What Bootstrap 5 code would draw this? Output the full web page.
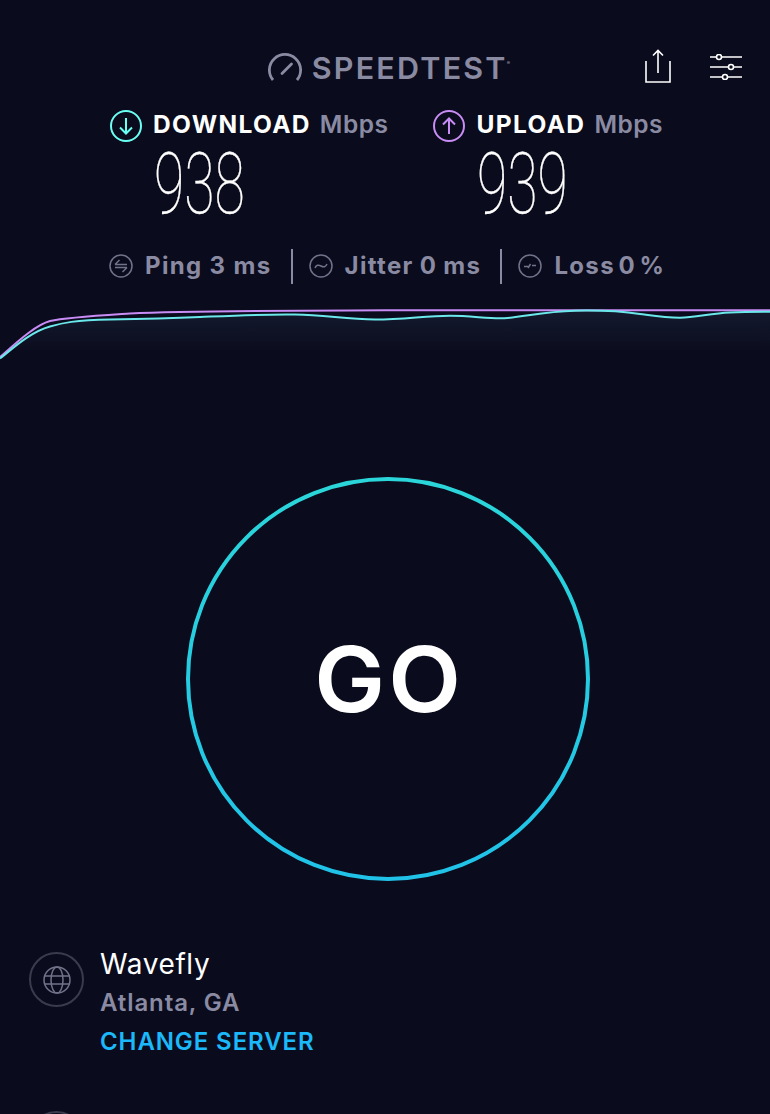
<!DOCTYPE html>
<html lang="en">
<head>
<meta charset="utf-8">
<title>Speedtest</title>
<link href="https://cdn.jsdelivr.net/npm/bootstrap@5.3.0/dist/css/bootstrap.min.css" rel="stylesheet">
<style>
html,body{height:1114px;overflow:hidden}
body{background:#0a0b1c;color:#fff;font-family:"Inter","Noto Sans",sans-serif}
.app-shell{width:770px;height:1114px;overflow:hidden;padding-top:48px}
.top-bar{display:grid;grid-template-columns:1fr auto 1fr;height:40px;align-items:center;padding-left:10px}
.brand-box{gap:10px}
.brand{color:#8a8ba3;font-size:30.5px;font-weight:600;line-height:40px;letter-spacing:2.2px}
.brand sup{font-size:5px;top:-14px;margin-left:-1px}
.top-actions{padding-right:28px;gap:39px}
.share-glyph{margin-bottom:5px}
.sliders-glyph{margin-bottom:2px}
.speeds{margin-top:22px;gap:45px;padding-left:3px}
.speed-head{font-size:24.5px;font-weight:700;height:32px;letter-spacing:1.35px;gap:11px;white-space:nowrap}
.speed-label{line-height:28px;margin-bottom:4px}
.speed-unit{color:#8a8ba3;font-weight:600;margin-left:9px;letter-spacing:.5px}
.speed-num{height:72px;margin-top:6px;margin-left:44px;font-family:"Roboto",sans-serif;font-weight:100;font-size:85px;line-height:72px;transform:scaleX(.65);transform-origin:0 0;white-space:nowrap;-webkit-text-stroke:.35px #fff}
.stats{margin-top:28px;height:36px;color:#8a8ba3;font-size:24px;font-weight:650;letter-spacing:1.35px;padding-left:109px}
.stat-item{gap:12px;white-space:nowrap}
.stat-jitter{word-spacing:-1px}
.stat-loss{word-spacing:-3.5px}
.stat-rule{width:2px;height:35px;background:#8a8ba3;flex:none;margin:0 16px 0 19px}
.graph{display:block;margin-top:11px;width:770px;height:75px}
.go-ring{width:404px;height:404px;margin:107px 0 0 186px}
.go-ring svg{inset:0}
.go-label{font-size:91px;font-weight:600;letter-spacing:3px;padding-left:3px;line-height:1;transform:scaleX(1.04)}
.server{margin:67px 0 0 29px;gap:16px}
.server-icon{width:55px;height:55px;flex:none;border:2px solid #3a3b4d;border-radius:50%;margin-top:4px}
.server-name{font-size:28px;font-weight:400;line-height:32px;letter-spacing:.6px}
.server-city{color:#8a8ba3;font-size:24px;font-weight:600;line-height:34px;margin-top:6px;letter-spacing:.9px}
.server-link{color:#1bb8fa;font-size:24px;font-weight:600;line-height:30px;margin-top:7px;text-decoration:none;display:block;letter-spacing:.9px}
.host-row{margin:54px 0 0 29px}
</style>
</head>
<body>
<main class="app-shell position-relative">
  <header class="top-bar">
    <div></div>
    <div class="brand-box d-flex align-items-center">
      <svg width="34" height="32" viewBox="0 0 34 32" fill="none" stroke="#8a8ba3" stroke-width="2.800"><path d="M5 28A15.600 15.600 0 1 1 29 28"/><path d="M14 21.500l9.500-9.500" stroke-linecap="round"/></svg>
      <span class="brand">SPEEDTEST<sup>®</sup></span>
    </div>
    <div class="top-actions d-flex justify-content-end align-items-center">
      <svg class="share-glyph" width="26" height="34" viewBox="0 0 26 34" fill="none" stroke="#fff" stroke-width="1.600"><path d="M1 12V33H25V12"/><path d="M13 24V1.500M8 6.500l5-5 5 5"/></svg>
      <svg class="sliders-glyph" width="32" height="26" viewBox="0 0 32 26" fill="none" stroke="#fff" stroke-width="1.600"><path d="M0 3h6M12 3h20M0 13h18M24 13h8M0 23h12M18 23h14"/><circle cx="9" cy="3" r="2.500"/><circle cx="21" cy="13" r="2.500"/><circle cx="15" cy="23" r="2.500"/></svg>
    </div>
  </header>

  <section class="speeds d-flex justify-content-center">
    <div>
      <div class="speed-head d-flex align-items-center">
        <svg width="32" height="32" viewBox="0 0 32 32" fill="none" stroke="#6afff3" stroke-width="2"><circle cx="16" cy="16" r="15"/><path d="M16 8v15M10 17.500l6 6 6-6"/></svg>
        <span class="speed-label">DOWNLOAD<span class="speed-unit">Mbps</span></span>
      </div>
      <div class="speed-num">938</div>
    </div>
    <div>
      <div class="speed-head d-flex align-items-center">
        <svg width="32" height="32" viewBox="0 0 32 32" fill="none" stroke="#c88cf5" stroke-width="2"><circle cx="16" cy="16" r="15"/><path d="M16 24V9M10 14.500l6-6 6 6"/></svg>
        <span class="speed-label">UPLOAD<span class="speed-unit">Mbps</span></span>
      </div>
      <div class="speed-num">939</div>
    </div>
  </section>

  <section class="stats d-flex align-items-center">
    <div class="stat-item d-flex align-items-center">
      <svg width="24" height="24" viewBox="0 0 24 24" fill="none" stroke="#72738a" stroke-width="1.500"><circle cx="12" cy="12" r="11"/><path d="M6 10.500h12M6 10.500l4.500-4.500M18 13.500H6M18 13.500l-4.500 4.500"/></svg>
      <span>Ping 3 ms</span>
    </div>
    <div class="stat-rule"></div>
    <div class="stat-item stat-jitter d-flex align-items-center">
      <svg width="24" height="24" viewBox="0 0 24 24" fill="none" stroke="#72738a" stroke-width="1.500"><circle cx="12" cy="12" r="11"/><path d="M6 14c1.300-3 3.300-3.500 6-2s4.700 1 6-2"/></svg>
      <span>Jitter 0 ms</span>
    </div>
    <div class="stat-rule"></div>
    <div class="stat-item stat-loss d-flex align-items-center">
      <svg width="24" height="24" viewBox="0 0 24 24" fill="none" stroke="#72738a" stroke-width="1.500"><circle cx="12" cy="12" r="11"/><path d="M6 12.500h4M10 14l2.500-4M14 11.500h4"/></svg>
      <span>Loss 0 %</span>
    </div>
  </section>

  <svg class="graph" viewBox="0 295 770 75" preserveAspectRatio="none" aria-hidden="true">
    <defs>
      <linearGradient id="glow" x1="0" y1="0" x2="0" y2="1">
        <stop offset="0" stop-color="#24304a" stop-opacity=".38"/>
        <stop offset="1" stop-color="#24304a" stop-opacity="0"/>
      </linearGradient>
    </defs>
    <path fill="url(#glow)" d="M0 358.500C12 349 30 332 50 326.500C62 323 75 320 110 319.500C140 319 165 318.500 200 317C235 315.500 265 314 295 314.500C325 315 345 319 375 319.500C405 319.500 425 315.700 450 315.700C470 315.700 485 318.300 500 318.300C520 318.300 540 311.500 575 310.700C600 310.200 620 311 640 314C655 316 665 317.700 680 317.700C695 317.700 710 313.500 730 312.500C745 311.700 760 311.700 770 311.700V350H0Z"/>
    <path fill="none" stroke="#c88cf5" stroke-width="2" d="M0 357C15 344 35 325 50 321C66 317.500 100 315.500 130 313.500C170 311.700 250 310.700 385 310.300H770"/>
    <path fill="none" stroke="#6ae8ea" stroke-width="2" d="M0 358.500C12 349 30 332 50 326.500C62 323 75 320 110 319.500C140 319 165 318.500 200 317C235 315.500 265 314 295 314.500C325 315 345 319 375 319.500C405 319.500 425 315.700 450 315.700C470 315.700 485 318.300 500 318.300C520 318.300 540 311.500 575 310.700C600 310.200 620 311 640 314C655 316 665 317.700 680 317.700C695 317.700 710 313.500 730 312.500C745 311.700 760 311.700 770 311.700"/>
  </svg>

  <div class="go-ring position-relative d-flex align-items-center justify-content-center">
    <svg class="position-absolute" width="404" height="404" viewBox="0 0 404 404" fill="none" aria-hidden="true">
      <defs>
        <linearGradient id="ring" x1="0" y1="0" x2="0" y2="1">
          <stop offset="0" stop-color="#2bd6da"/>
          <stop offset="1" stop-color="#20c2e8"/>
        </linearGradient>
      </defs>
      <circle cx="202" cy="202" r="200" stroke="url(#ring)" stroke-width="4"/>
    </svg>
    <span class="go-label">GO</span>
  </div>

  <section class="server d-flex">
    <div class="server-icon d-flex align-items-center justify-content-center">
      <svg width="28" height="28" viewBox="0 0 28 28" fill="none" stroke="#72738a" stroke-width="1.500"><circle cx="14" cy="14" r="13"/><ellipse cx="14" cy="14" rx="6" ry="13"/><path d="M2 10h24M2 18h24"/></svg>
    </div>
    <div>
      <div class="server-name">Wavefly</div>
      <div class="server-city">Atlanta, GA</div>
      <a class="server-link" href="#">CHANGE SERVER</a>
    </div>
  </section>
  <div class="host-row"><div class="server-icon"></div></div>
</main>
</body>
</html>
